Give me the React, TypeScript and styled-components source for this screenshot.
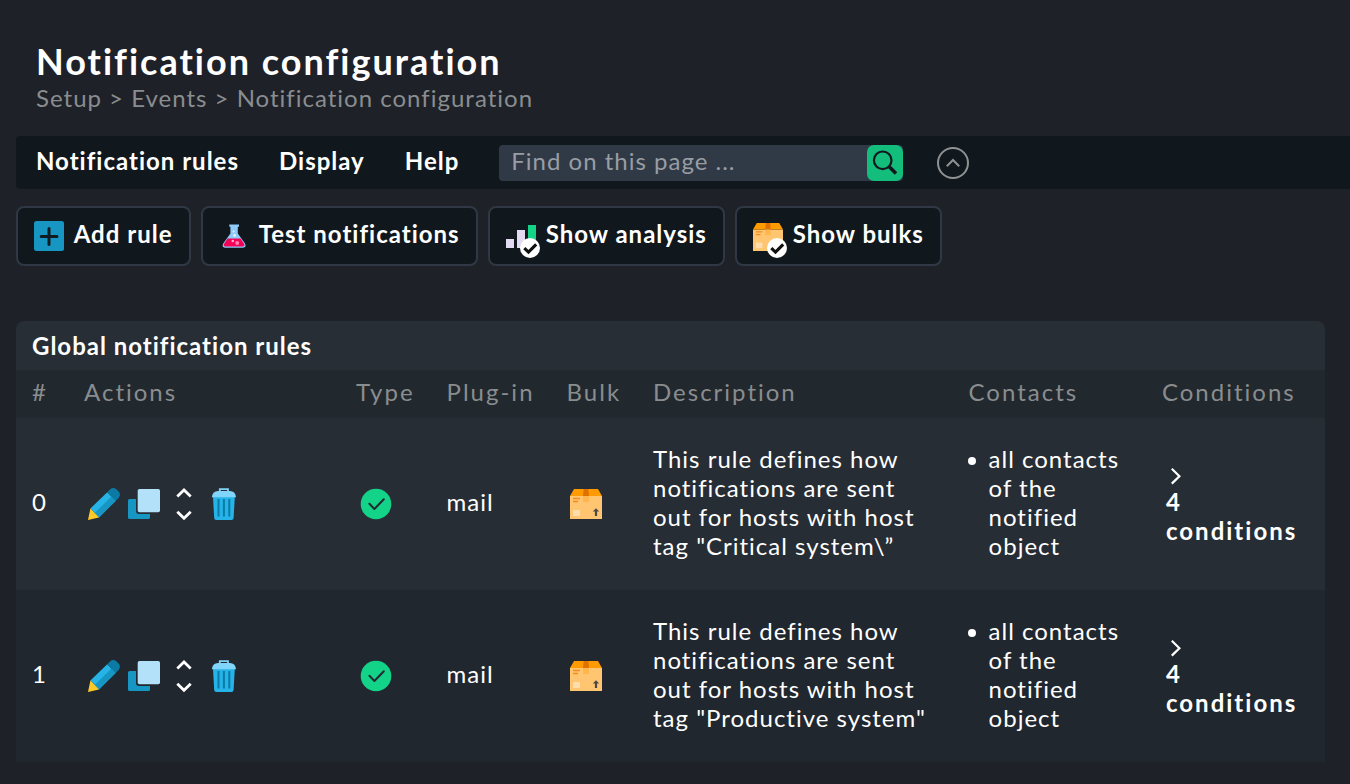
import React from "react";
import styled, { createGlobalStyle } from "styled-components";

const GlobalStyle = createGlobalStyle`
  * { box-sizing: border-box; }
  body {
    margin: 0;
    background: #1e2128;
    color: #fff;
    font-family: "Lato", sans-serif;
    font-size: 24px;
    line-height: 29px;
    letter-spacing: 1px;
    overflow: hidden;
  }
`;

const Page = styled.main`
  display: flex;
  flex-direction: column;
  width: 1350px;
  height: 784px;
  padding: 39px 0 0 16px;
  background: #1e2128;
`;

const PageHeader = styled.header`
  height: 97px;
  padding-left: 20px;
`;

const Title = styled.h1`
  margin: 0;
  font-size: 36px;
  line-height: 44px;
  font-weight: 700;
  letter-spacing: 2px;
`;

const Breadcrumb = styled.div`
  color: #8a8d8f;
`;

const MenuBar = styled.nav`
  display: flex;
  align-items: flex-start;
  height: 53px;
  background: #11181d;
  border-radius: 4px 0 0 4px;
`;

const MenuItem = styled.div`
  padding: 10px 20px 0;
  font-weight: 700;
`;

const Search = styled.div`
  display: flex;
  width: 404px;
  height: 36px;
  margin: 9px 34px 0 20px;
  background: #303946;
  border-radius: 4px;
`;

const SearchText = styled.div`
  flex: 1;
  padding: 1px 0 0 12px;
  color: #989da4;
`;

const SearchButton = styled.div`
  width: 36px;
  height: 36px;
  background: #13bd7b;
  border-radius: 7px;
`;

const Toggle = styled.div`
  width: 32px;
  height: 32px;
  margin-top: 11px;
`;

const Icon = styled.svg`
  display: block;
  overflow: visible;
`;

const Buttons = styled.div`
  display: flex;
  gap: 10px;
  margin-top: 17px;
`;

const Button = styled.div<{ $width: number }>`
  display: flex;
  gap: 10px;
  width: ${(p) => p.$width}px;
  height: 60px;
  padding: 13px 0 0 16px;
  border: 2px solid #2f3844;
  border-radius: 8px;
  background: #11181d;
  white-space: nowrap;
`;

const ButtonLabel = styled.span`
  margin: -2px 0 0 -0.3px;
  font-weight: 700;
`;

const Table = styled.section`
  width: 1309px;
  margin-top: 55px;
`;

const TableTitle = styled.h2`
  height: 49px;
  margin: 0;
  padding: 10px 16px 0;
  font-size: 24px;
  line-height: 29px;
  font-weight: 700;
  background: #272e36;
  border-radius: 8px 8px 0 0;
`;

const Row = styled.div`
  display: grid;
  grid-template-columns: 52px 272px 90.6px 120px 86.4px 315.6px 193.4px 1fr;
  align-items: center;
  padding-left: 16px;
`;

const HeaderRow = styled(Row)`
  height: 48px;
  padding-bottom: 6px;
  color: #8a8d8f;
  letter-spacing: 2px;
  background: #21282e;
`;

const RuleRow = styled(Row)<{ $odd: boolean }>`
  height: 172px;
  background: ${(p) => (p.$odd ? "#21272e" : "#272d34")};
`;

const TextCell = styled.div`
  padding-bottom: 5px;
`;

const Actions = styled.div`
  display: flex;
  gap: 8px;
  padding-left: 4px;
`;

const IconCell = styled.div<{ $pad: number }>`
  padding-left: ${(p) => p.$pad}px;
`;

const Description = styled.div`
  width: 285px;
  padding-bottom: 4px;
`;

const Contacts = styled.ul`
  width: 165px;
  margin: 0;
  padding: 0 0 4px 20px;
  list-style: none;
`;

const Contact = styled.li`
  position: relative;
  width: 136px;
  &::before {
    content: "";
    position: absolute;
    left: -20.4px;
    top: 13px;
    width: 8px;
    height: 8px;
    border-radius: 50%;
    background: #fff;
  }
`;

const Conditions = styled.div`
  width: 140px;
  padding: 0 0 5px 4px;
  font-weight: 700;
  letter-spacing: 2px;
`;

const Arrow = styled.div`
  height: 28px;
  padding: 9px 0 0 5px;
`;

const SearchIcon = () => (
  <Icon width="36" height="36" fill="none" stroke="#11181d">
    <circle cx="15.7" cy="15.3" r="8.8" strokeWidth="2.2" />
    <path d="M22 21.5L29 28.5" strokeWidth="3.6" />
  </Icon>
);

const CollapseIcon = () => (
  <Icon width="32" height="32" fill="none" stroke="#8f9192">
    <circle cx="16" cy="16" r="15" strokeWidth="2" />
    <path d="M9.8 19.2L16 13L22.2 19.2" strokeWidth="2" />
  </Icon>
);

const AddIcon = () => (
  <Icon width="30" height="30">
    <rect width="30" height="30" rx="2.5" fill="#1796c4" />
    <path d="M15 7.6V23.4M7.2 15.6H23" stroke="#0f1c24" strokeWidth="3" strokeLinecap="round" />
  </Icon>
);

const FlaskIcon = () => (
  <Icon width="30" height="30">
    <path d="M10.3 3.5H20v2.3H18.8V12.5L26 22.5Q27.8 26.5 24 26.7H6Q2.4 26.5 4.2 22.5L11.4 12.5V5.8H10.3Z" fill="#90caf9" />
    <path d="M8.5 17.6H21.6L25.2 23Q26 25.4 23.8 25.5H6.4Q4 25.4 5 23Z" fill="#f50057" />
    <circle cx="18.2" cy="22" r="2" fill="#ff80ab" />
    <circle cx="13.8" cy="20" r="1.3" fill="#ffb3cc" />
    <circle cx="15.6" cy="14.4" r="1.4" fill="#e3f2fd" />
    <circle cx="14.6" cy="10.5" r="1" fill="#e3f2fd" />
  </Icon>
);

const Badge = () => (
  <>
    <circle cx="24" cy="27" r="10" fill="#fff" />
    <path d="M18.3 27.2L22.5 31.2L30.2 23.4" fill="none" stroke="#101010" strokeWidth="3.1" />
  </>
);

const AnalysisIcon = () => (
  <Icon width="30" height="30">
    <path d="M0 18h8v9H0zM11 9h8v18h-8z" fill="#e2d9f3" />
    <path d="M22 4h8v23h-8z" fill="#13d389" />
    <Badge />
  </Icon>
);

const BoxShape = ({ arrow }: { arrow?: boolean }) => (
  <>
    <path d="M0 7H32V30H0z" fill="#ffc570" />
    <path d="M4 0H28L32 7H0z" fill="#ff9a00" />
    <path d="M13.7 0H18.3L19 7H13z" fill="#e07000" />
    <path d="M13 7h6v6h-6z" fill="#ffb74d" />
    <path d="M3 9.5H10M3 12.5H8" stroke="#f58a1f" strokeWidth="1.3" />
    <path d="M3 21h7v6H3z" fill="#ffdcab" />
    {arrow && <path d="M26 19.2L29.2 22.6H27.1V27H24.9V22.6H22.8Z" fill="#4b4a49" />}
  </>
);

const BulkButtonIcon = () => (
  <Icon width="30" height="30">
    <g transform="translate(0 2) scale(.9375 .9333)">
      <BoxShape />
    </g>
    <Badge />
  </Icon>
);

const BoxIcon = () => (
  <Icon width="32" height="30">
    <BoxShape arrow />
  </Icon>
);

const PencilIcon = () => (
  <Icon width="32" height="32">
    <path d="M2.4 20.5L19.2 4.2L27.8 12.7L11 29.4z" fill="#25b3e8" />
    <path d="M6.7 25L23.5 8.5L27.8 12.7L11 29.4z" fill="#1796c4" />
    <path d="M19.2 4.2L22 1.5Q25 -1.2 28.3 1.2L30.7 3.6Q33.2 6.8 30.6 9.9L27.8 12.7z" fill="#0b7ba6" />
    <path d="M2.4 20.5L11 29.4L0 32z" fill="#ffca28" />
  </Icon>
);

const CopyIcon = () => (
  <Icon width="32" height="32">
    <path d="M1.5 11H8V23Q8 26 11 26H22V29.5Q22 31 20.5 31H1.5Q0 31 0 29.5V12.5Q0 11 1.5 11Z" fill="#1796c4" />
    <rect x="9.7" y="1" width="22.3" height="23.2" rx="1.8" fill="#b3e1fa" />
  </Icon>
);

const MoveIcon = () => (
  <Icon width="32" height="32" fill="none" stroke="#fff" strokeWidth="2.8">
    <path d="M9.3 8.4L16 2L22.7 8.4M9.3 23.8L16 30.2L22.7 23.8" />
  </Icon>
);

const TrashIcon = () => (
  <Icon width="32" height="32">
    <path d="M5 9H26.8L25.6 30Q25.4 32 23.5 32H8.2Q6.3 32 6.2 30Z" fill="#25b3e8" />
    <path d="M10.5 11V28.5M15.9 11V28.5M21.3 11V28.5" stroke="#0b7ba6" strokeWidth="2" />
    <path d="M11.8 4V1.2H20V4" fill="none" stroke="#81d4fa" strokeWidth="1.8" />
    <path d="M3.8 9.2Q4.6 3 10 3H22Q27.2 3 28.1 9.2Z" fill="#81d4fa" />
  </Icon>
);

const CheckIcon = () => (
  <Icon width="32" height="32">
    <circle cx="16" cy="16" r="15.3" fill="#13d389" />
    <path d="M9.4 15.8L14.4 21L23.8 11.2" fill="none" stroke="#202a30" strokeWidth="2" strokeLinecap="round" strokeLinejoin="round" />
  </Icon>
);

const ExpandIcon = () => (
  <Icon width="10" height="16" fill="none" stroke="#fff" strokeWidth="2.2">
    <path d="M0.8 0.8L8.4 8.2L0.8 15.6" />
  </Icon>
);

const buttons = [
  { label: "Add rule", width: 175, icon: <AddIcon /> },
  { label: "Test notifications", width: 277, icon: <FlaskIcon /> },
  { label: "Show analysis", width: 237, icon: <AnalysisIcon /> },
  { label: "Show bulks", width: 207, icon: <BulkButtonIcon /> },
];

const columns = ["#", "Actions", "Type", "Plug-in", "Bulk", "Description", "Contacts", "Conditions"];

const rules = [
  'This rule defines how notifications are sent out for hosts with host tag "Critical system\\”',
  'This rule defines how notifications are sent out for hosts with host tag "Productive system"',
];

export default function App() {
  return (
    <Page>
      <GlobalStyle />
      <PageHeader>
        <Title>Notification configuration</Title>
        <Breadcrumb>Setup &gt; Events &gt; Notification configuration</Breadcrumb>
      </PageHeader>
      <MenuBar>
        <MenuItem>Notification rules</MenuItem>
        <MenuItem>Display</MenuItem>
        <MenuItem>Help</MenuItem>
        <Search>
          <SearchText>Find on this page ...</SearchText>
          <SearchButton>
            <SearchIcon />
          </SearchButton>
        </Search>
        <Toggle>
          <CollapseIcon />
        </Toggle>
      </MenuBar>
      <Buttons>
        {buttons.map((b) => (
          <Button key={b.label} $width={b.width}>
            {b.icon}
            <ButtonLabel>{b.label}</ButtonLabel>
          </Button>
        ))}
      </Buttons>
      <Table>
        <TableTitle>Global notification rules</TableTitle>
        <HeaderRow>
          {columns.map((c) => (
            <div key={c}>{c}</div>
          ))}
        </HeaderRow>
        {rules.map((text, i) => (
          <RuleRow key={i} $odd={i % 2 === 1}>
            <TextCell>{i}</TextCell>
            <Actions>
              <PencilIcon />
              <CopyIcon />
              <MoveIcon />
              <TrashIcon />
            </Actions>
            <IconCell $pad={4}>
              <CheckIcon />
            </IconCell>
            <TextCell>mail</TextCell>
            <IconCell $pad={3.4}>
              <BoxIcon />
            </IconCell>
            <Description>{text}</Description>
            <Contacts>
              <Contact>all contacts of the notified object</Contact>
            </Contacts>
            <Conditions>
              <Arrow>
                <ExpandIcon />
              </Arrow>
              4 conditions
            </Conditions>
          </RuleRow>
        ))}
      </Table>
    </Page>
  );
}
